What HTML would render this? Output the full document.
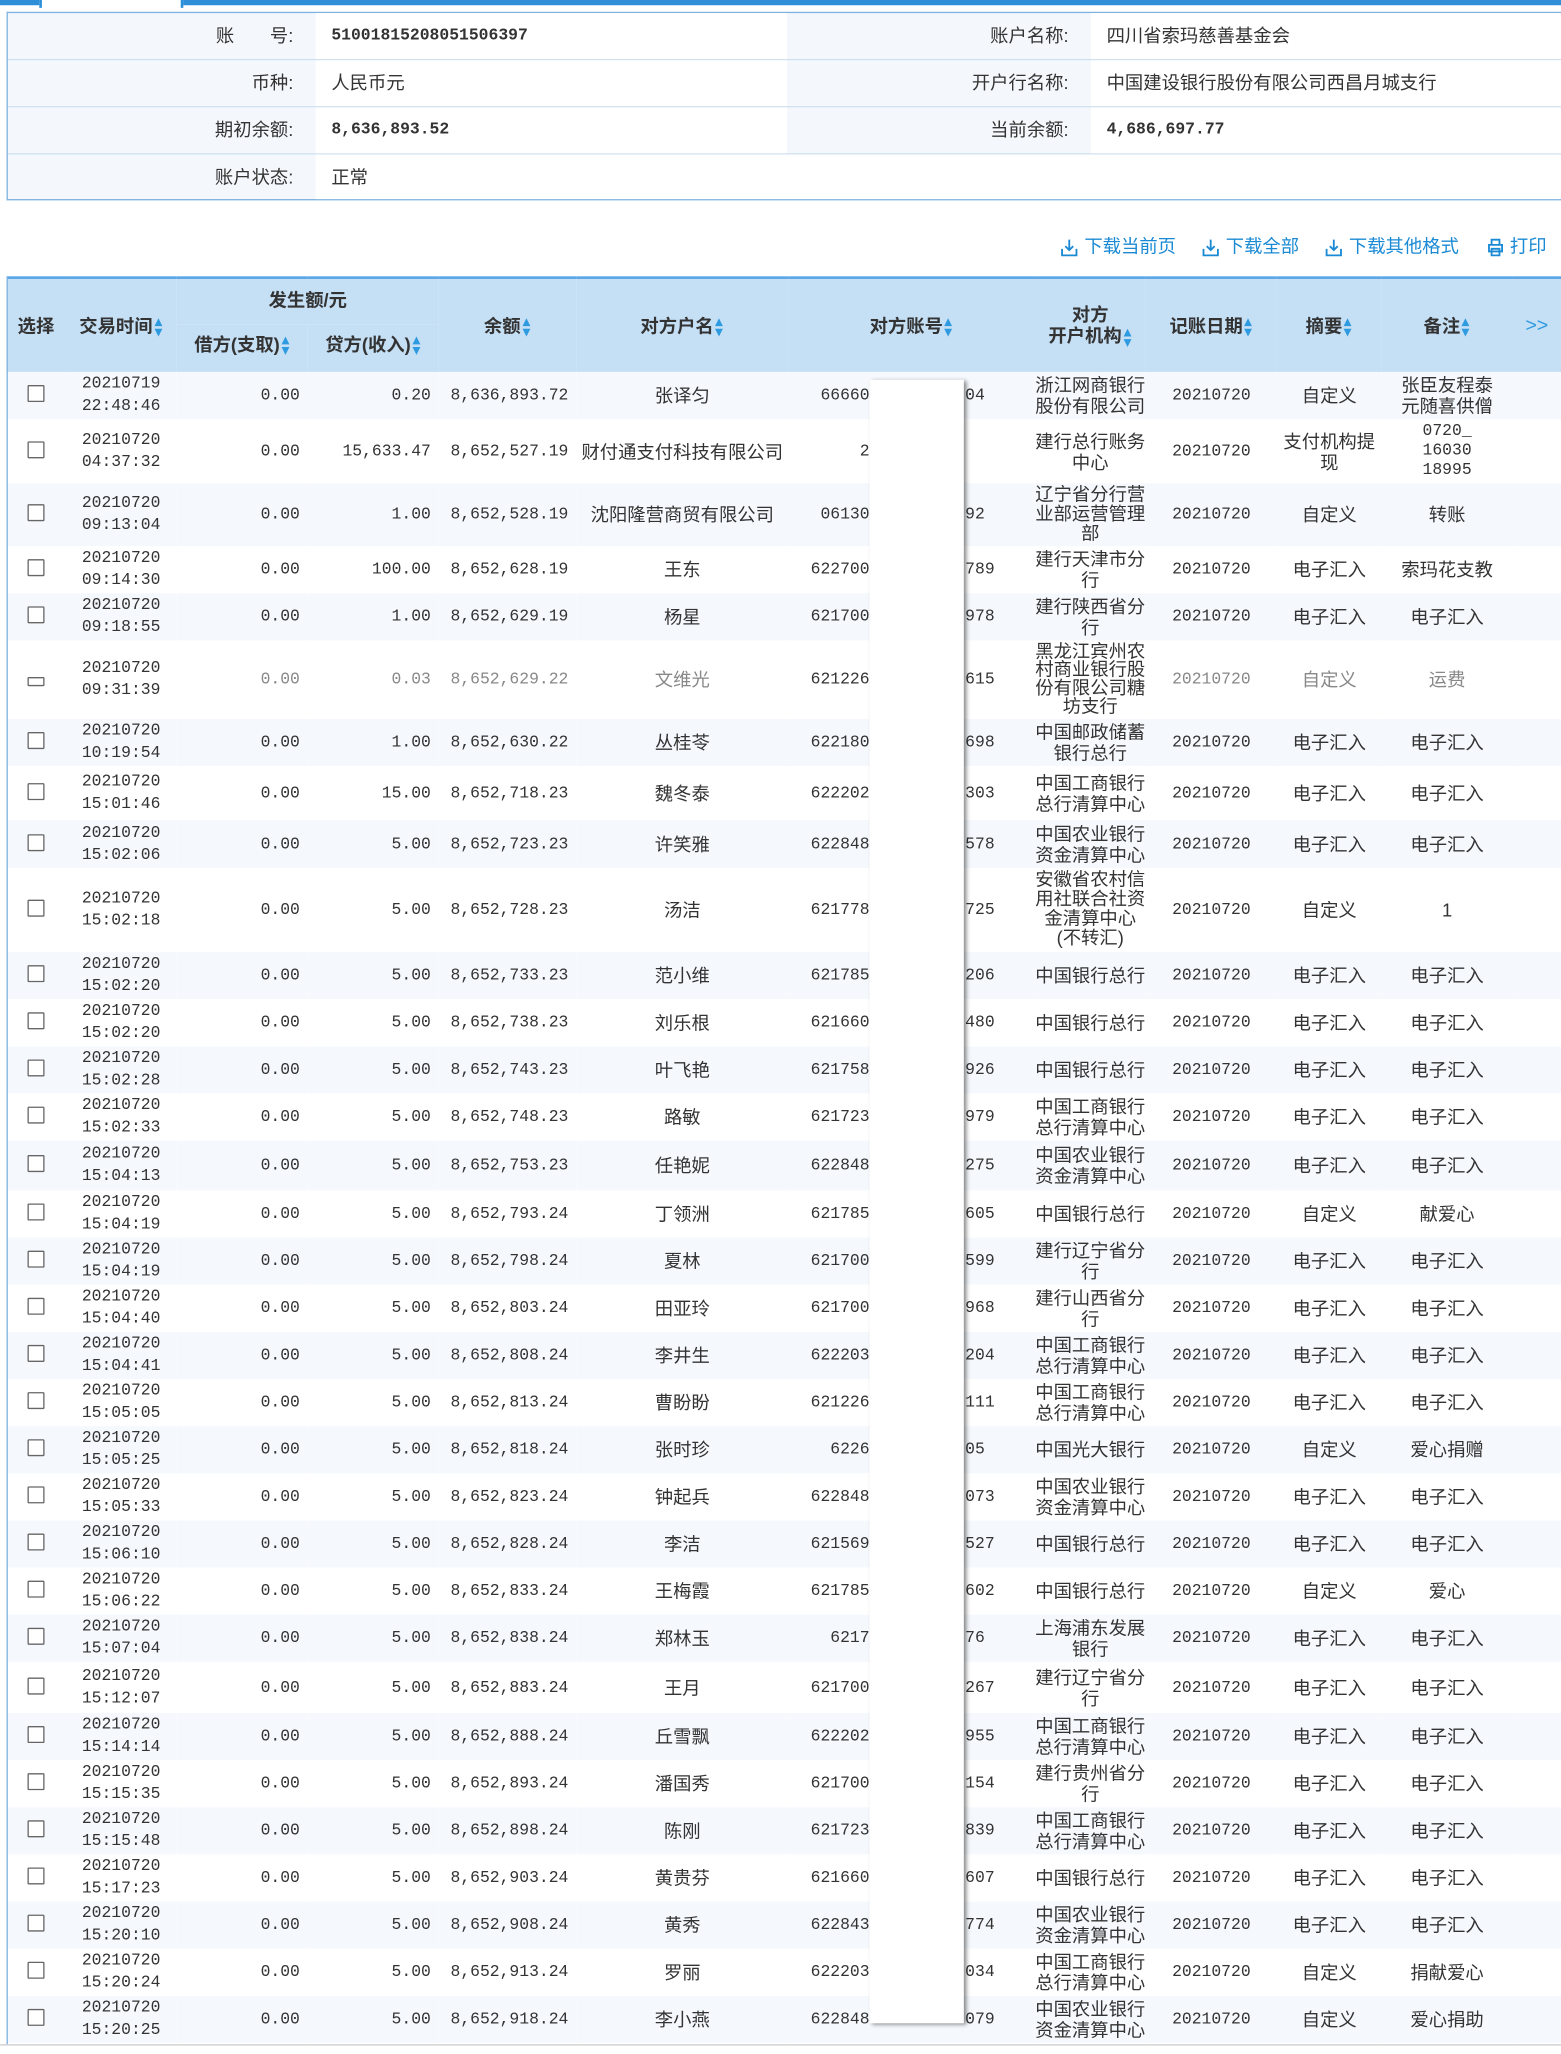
<!DOCTYPE html>
<html><head><meta charset="utf-8">
<style>
html,body{margin:0;padding:0;background:#fff;width:1561px;height:2054px;overflow:hidden}
#w{position:absolute;left:0;top:0;width:1192px;height:1568px;transform:scale(1.30957);transform-origin:0 0;font-family:"Liberation Sans","Noto Sans CJK SC",sans-serif;color:#333;font-size:14px}
.abs{position:absolute}
.info{position:absolute;left:5px;top:9px;width:1187px;height:144px;border:1px solid #7fb2e0;border-right:none;box-sizing:border-box;background:#f4f8fc}
.info .r{position:absolute;left:0;width:100%;height:35px;border-bottom:1px solid #cfe0f0}
.info .v{position:absolute;top:0;height:35px;background:#fff;line-height:35px;padding-left:12px;box-sizing:border-box}
.info .l{position:absolute;top:0;height:35px;line-height:35px;text-align:right}
.num{font-family:"Liberation Mono",monospace;font-size:12.5px}
.links{position:absolute;top:178px;color:#1a8ad4;font-size:14px;line-height:20px}
table{position:absolute;left:5px;top:211px;width:1187px;border-collapse:collapse;table-layout:fixed}
th{background:#c5dff5;font-weight:bold;font-size:14px;color:#333;padding:0;text-align:center}
td{padding:0;text-align:center;font-size:14px;line-height:16px;vertical-align:middle;overflow:hidden}
tr.o td{background:#f5f9fd}
tr.e td{background:#fff}
td.n{font-family:"Liberation Mono",monospace;font-size:12.5px;text-align:right;padding-right:6px}
td.t{font-family:"Liberation Mono",monospace;font-size:12.5px;line-height:17px}
td.d{font-family:"Liberation Mono",monospace;font-size:12.5px}
td.a{position:relative}
td.a span.x{position:absolute;right:126px;top:50%;margin-top:-8px;font-family:"Liberation Mono",monospace;font-size:12.5px}
td.a span.y{position:absolute;left:135px;top:50%;margin-top:-8px;font-family:"Liberation Mono",monospace;font-size:12.5px}
.cb{display:inline-block;width:11px;height:11px;border:1px solid #666;background:#fff;border-radius:1px}
.s{display:inline-block;width:7px;height:14px;vertical-align:middle;margin-left:1px;position:relative}
.s:before{content:"";position:absolute;left:0;top:0;border-left:3.5px solid transparent;border-right:3.5px solid transparent;border-bottom:6px solid #2e9ae0}
.s:after{content:"";position:absolute;left:0;top:8px;border-left:3.5px solid transparent;border-right:3.5px solid transparent;border-top:6px solid #2e9ae0}
.clip{overflow:hidden;line-height:14px}
</style></head><body><div id="w">
<div class="abs" style="left:0;top:0;width:30px;height:4px;background:#2e8fd8"></div>
<div class="abs" style="left:30px;top:0;width:2px;height:6px;background:#2e8fd8"></div>
<div class="abs" style="left:140px;top:0;width:1052px;height:4px;background:#2e8fd8"></div>
<div class="abs" style="left:138px;top:0;width:2px;height:6px;background:#2e8fd8"></div>

<div class="info">
 <div class="r" style="top:0"><div class="l" style="left:0;width:218px">账&nbsp;&nbsp;&nbsp;&nbsp;&nbsp;&nbsp;&nbsp;号:</div><div class="v num" style="left:235px;width:360px;font-weight:bold">51001815208051506397</div><div class="l" style="left:595px;width:215px">账户名称:</div><div class="v" style="left:827px;width:360px">四川省索玛慈善基金会</div></div>
 <div class="r" style="top:36px"><div class="l" style="left:0;width:218px">币种:</div><div class="v" style="left:235px;width:360px">人民币元</div><div class="l" style="left:595px;width:215px">开户行名称:</div><div class="v" style="left:827px;width:360px">中国建设银行股份有限公司西昌月城支行</div></div>
 <div class="r" style="top:72px"><div class="l" style="left:0;width:218px">期初余额:</div><div class="v num" style="left:235px;width:360px;font-weight:bold">8,636,893.52</div><div class="l" style="left:595px;width:215px">当前余额:</div><div class="v num" style="left:827px;width:360px;font-weight:bold">4,686,697.77</div></div>
 <div class="r" style="top:108px;height:34px;border-bottom:none"><div class="l" style="left:0;width:218px;height:34px">账户状态:</div><div class="v" style="left:235px;width:952px;height:34px">正常</div></div>
</div>

<svg class="abs" style="left:810px;top:182px" width="13" height="14" viewBox="0 0 13 14"><path d="M6.5 1v8M3.5 6l3 3 3-3M1 8v5h11V8" fill="none" stroke="#1a8ad4" stroke-width="1.4"/></svg>
<div class="links" style="left:828px">下载当前页</div>
<svg class="abs" style="left:918px;top:182px" width="13" height="14" viewBox="0 0 13 14"><path d="M6.5 1v8M3.5 6l3 3 3-3M1 8v5h11V8" fill="none" stroke="#1a8ad4" stroke-width="1.4"/></svg>
<div class="links" style="left:936px">下载全部</div>
<svg class="abs" style="left:1012px;top:182px" width="13" height="14" viewBox="0 0 13 14"><path d="M6.5 1v8M3.5 6l3 3 3-3M1 8v5h11V8" fill="none" stroke="#1a8ad4" stroke-width="1.4"/></svg>
<div class="links" style="left:1030px">下载其他格式</div>
<svg class="abs" style="left:1136px;top:182px" width="12" height="14" viewBox="0 0 12 14"><path d="M3 5V1h6v4M1 5h10v5H1zM3 8h6v5H3z" fill="none" stroke="#1a8ad4" stroke-width="1.4"/></svg>
<div class="links" style="left:1153px">打印</div>

<table>
<colgroup><col style="width:45px"><col style="width:85px"><col style="width:100px"><col style="width:100px"><col style="width:105px"><col style="width:162px"><col style="width:188px"><col style="width:85px"><col style="width:100px"><col style="width:80px"><col style="width:100px"><col style="width:37px"></colgroup>
<tr style="height:36px"><th rowspan="2" style="border-top:2px solid #5aa5e6">选择</th><th rowspan="2" style="border-top:2px solid #5aa5e6">交易时间<i class="s"></i></th><th colspan="2" style="border-top:2px solid #5aa5e6;vertical-align:bottom;padding-bottom:9px">发生额/元</th><th rowspan="2" style="border-top:2px solid #5aa5e6">余额<i class="s"></i></th><th rowspan="2" style="border-top:2px solid #5aa5e6">对方户名<i class="s"></i></th><th rowspan="2" style="border-top:2px solid #5aa5e6">对方账号<i class="s"></i></th><th rowspan="2" style="border-top:2px solid #5aa5e6;line-height:16px">对方<br>开户机构<i class="s"></i></th><th rowspan="2" style="border-top:2px solid #5aa5e6">记账日期<i class="s"></i></th><th rowspan="2" style="border-top:2px solid #5aa5e6">摘要<i class="s"></i></th><th rowspan="2" style="border-top:2px solid #5aa5e6">备注<i class="s"></i></th><th rowspan="2" style="border-top:2px solid #5aa5e6;color:#2e9ae0;font-weight:normal;font-size:15px">&gt;&gt;</th></tr>
<tr style="height:36px"><th style="vertical-align:top;padding-top:5px">借方(支取)<i class="s"></i></th><th style="vertical-align:top;padding-top:5px">贷方(收入)<i class="s"></i></th></tr>

<tr class="o" style="height:36px"><td><i class="cb"></i></td><td class="t">20210719<br>22:48:46</td><td class="n">0.00</td><td class="n">0.20</td><td class="n">8,636,893.72</td><td>张译匀</td><td class="a"><span class="x">66660</span><span class="y">04</span></td><td>浙江网商银行股份有限公司</td><td class="d">20210720</td><td>自定义</td><td>张臣友程泰<br>元随喜供僧</td><td></td></tr>
<tr class="e" style="height:49px"><td><i class="cb"></i></td><td class="t">20210720<br>04:37:32</td><td class="n">0.00</td><td class="n">15,633.47</td><td class="n">8,652,527.19</td><td>财付通支付科技有限公司</td><td class="a"><span class="x">2</span></td><td>建行总行账务中心</td><td class="d">20210720</td><td>支付机构提现</td><td class="d" style="line-height:15px">0720_<br>16030<br>18995</td><td></td></tr>
<tr class="o" style="height:48px"><td><i class="cb"></i></td><td class="t">20210720<br>09:13:04</td><td class="n">0.00</td><td class="n">1.00</td><td class="n">8,652,528.19</td><td>沈阳隆营商贸有限公司</td><td class="a"><span class="x">06130</span><span class="y">92</span></td><td><div class="clip" style="height:46px;line-height:15px">辽宁省分行营业部运营管理部</div></td><td class="d">20210720</td><td>自定义</td><td>转账</td><td></td></tr>
<tr class="e" style="height:36px"><td><i class="cb"></i></td><td class="t">20210720<br>09:14:30</td><td class="n">0.00</td><td class="n">100.00</td><td class="n">8,652,628.19</td><td>王东</td><td class="a"><span class="x">622700</span><span class="y">789</span></td><td>建行天津市分行</td><td class="d">20210720</td><td>电子汇入</td><td>索玛花支教</td><td></td></tr>
<tr class="o" style="height:36px"><td><i class="cb"></i></td><td class="t">20210720<br>09:18:55</td><td class="n">0.00</td><td class="n">1.00</td><td class="n">8,652,629.19</td><td>杨星</td><td class="a"><span class="x">621700</span><span class="y">978</span></td><td>建行陕西省分行</td><td class="d">20210720</td><td>电子汇入</td><td>电子汇入</td><td></td></tr>
<tr class="e" style="height:60px"><td><i class="cb" style="height:5px"></i></td><td class="t">20210720<br>09:31:39</td><td class="n" style="color:#888">0.00</td><td class="n" style="color:#888">0.03</td><td class="n" style="color:#888">8,652,629.22</td><td style="color:#888">文维光</td><td class="a"><span class="x">621226</span><span class="y">615</span></td><td><div class="clip" style="height:58px">黑龙江宾州农村商业银行股份有限公司糖坊支行</div></td><td class="d" style="color:#888">20210720</td><td style="color:#888">自定义</td><td style="color:#888">运费</td><td></td></tr>
<tr class="o" style="height:36px"><td><i class="cb"></i></td><td class="t">20210720<br>10:19:54</td><td class="n">0.00</td><td class="n">1.00</td><td class="n">8,652,630.22</td><td>丛桂苓</td><td class="a"><span class="x">622180</span><span class="y">698</span></td><td>中国邮政储蓄银行总行</td><td class="d">20210720</td><td>电子汇入</td><td>电子汇入</td><td></td></tr>
<tr class="e" style="height:41px"><td><i class="cb"></i></td><td class="t">20210720<br>15:01:46</td><td class="n">0.00</td><td class="n">15.00</td><td class="n">8,652,718.23</td><td>魏冬泰</td><td class="a"><span class="x">622202</span><span class="y">303</span></td><td>中国工商银行总行清算中心</td><td class="d">20210720</td><td>电子汇入</td><td>电子汇入</td><td></td></tr>
<tr class="o" style="height:37px"><td><i class="cb"></i></td><td class="t">20210720<br>15:02:06</td><td class="n">0.00</td><td class="n">5.00</td><td class="n">8,652,723.23</td><td>许笑雅</td><td class="a"><span class="x">622848</span><span class="y">578</span></td><td>中国农业银行资金清算中心</td><td class="d">20210720</td><td>电子汇入</td><td>电子汇入</td><td></td></tr>
<tr class="e" style="height:64px"><td><i class="cb"></i></td><td class="t">20210720<br>15:02:18</td><td class="n">0.00</td><td class="n">5.00</td><td class="n">8,652,728.23</td><td>汤洁</td><td class="a"><span class="x">621778</span><span class="y">725</span></td><td><div class="clip" style="height:62px;line-height:15px">安徽省农村信用社联合社资金清算中心(不转汇)</div></td><td class="d">20210720</td><td>自定义</td><td>1</td><td></td></tr>
<tr class="o" style="height:36px"><td><i class="cb"></i></td><td class="t">20210720<br>15:02:20</td><td class="n">0.00</td><td class="n">5.00</td><td class="n">8,652,733.23</td><td>范小维</td><td class="a"><span class="x">621785</span><span class="y">206</span></td><td>中国银行总行</td><td class="d">20210720</td><td>电子汇入</td><td>电子汇入</td><td></td></tr>
<tr class="e" style="height:36px"><td><i class="cb"></i></td><td class="t">20210720<br>15:02:20</td><td class="n">0.00</td><td class="n">5.00</td><td class="n">8,652,738.23</td><td>刘乐根</td><td class="a"><span class="x">621660</span><span class="y">480</span></td><td>中国银行总行</td><td class="d">20210720</td><td>电子汇入</td><td>电子汇入</td><td></td></tr>
<tr class="o" style="height:36px"><td><i class="cb"></i></td><td class="t">20210720<br>15:02:28</td><td class="n">0.00</td><td class="n">5.00</td><td class="n">8,652,743.23</td><td>叶飞艳</td><td class="a"><span class="x">621758</span><span class="y">926</span></td><td>中国银行总行</td><td class="d">20210720</td><td>电子汇入</td><td>电子汇入</td><td></td></tr>
<tr class="e" style="height:36px"><td><i class="cb"></i></td><td class="t">20210720<br>15:02:33</td><td class="n">0.00</td><td class="n">5.00</td><td class="n">8,652,748.23</td><td>路敏</td><td class="a"><span class="x">621723</span><span class="y">979</span></td><td>中国工商银行总行清算中心</td><td class="d">20210720</td><td>电子汇入</td><td>电子汇入</td><td></td></tr>
<tr class="o" style="height:38px"><td><i class="cb"></i></td><td class="t">20210720<br>15:04:13</td><td class="n">0.00</td><td class="n">5.00</td><td class="n">8,652,753.23</td><td>任艳妮</td><td class="a"><span class="x">622848</span><span class="y">275</span></td><td>中国农业银行资金清算中心</td><td class="d">20210720</td><td>电子汇入</td><td>电子汇入</td><td></td></tr>
<tr class="e" style="height:36px"><td><i class="cb"></i></td><td class="t">20210720<br>15:04:19</td><td class="n">0.00</td><td class="n">5.00</td><td class="n">8,652,793.24</td><td>丁领洲</td><td class="a"><span class="x">621785</span><span class="y">605</span></td><td>中国银行总行</td><td class="d">20210720</td><td>自定义</td><td>献爱心</td><td></td></tr>
<tr class="o" style="height:36px"><td><i class="cb"></i></td><td class="t">20210720<br>15:04:19</td><td class="n">0.00</td><td class="n">5.00</td><td class="n">8,652,798.24</td><td>夏林</td><td class="a"><span class="x">621700</span><span class="y">599</span></td><td>建行辽宁省分行</td><td class="d">20210720</td><td>电子汇入</td><td>电子汇入</td><td></td></tr>
<tr class="e" style="height:36px"><td><i class="cb"></i></td><td class="t">20210720<br>15:04:40</td><td class="n">0.00</td><td class="n">5.00</td><td class="n">8,652,803.24</td><td>田亚玲</td><td class="a"><span class="x">621700</span><span class="y">968</span></td><td>建行山西省分行</td><td class="d">20210720</td><td>电子汇入</td><td>电子汇入</td><td></td></tr>
<tr class="o" style="height:36px"><td><i class="cb"></i></td><td class="t">20210720<br>15:04:41</td><td class="n">0.00</td><td class="n">5.00</td><td class="n">8,652,808.24</td><td>李井生</td><td class="a"><span class="x">622203</span><span class="y">204</span></td><td>中国工商银行总行清算中心</td><td class="d">20210720</td><td>电子汇入</td><td>电子汇入</td><td></td></tr>
<tr class="e" style="height:36px"><td><i class="cb"></i></td><td class="t">20210720<br>15:05:05</td><td class="n">0.00</td><td class="n">5.00</td><td class="n">8,652,813.24</td><td>曹盼盼</td><td class="a"><span class="x">621226</span><span class="y">111</span></td><td>中国工商银行总行清算中心</td><td class="d">20210720</td><td>电子汇入</td><td>电子汇入</td><td></td></tr>
<tr class="o" style="height:36px"><td><i class="cb"></i></td><td class="t">20210720<br>15:05:25</td><td class="n">0.00</td><td class="n">5.00</td><td class="n">8,652,818.24</td><td>张时珍</td><td class="a"><span class="x">6226</span><span class="y">05</span></td><td>中国光大银行</td><td class="d">20210720</td><td>自定义</td><td>爱心捐赠</td><td></td></tr>
<tr class="e" style="height:36px"><td><i class="cb"></i></td><td class="t">20210720<br>15:05:33</td><td class="n">0.00</td><td class="n">5.00</td><td class="n">8,652,823.24</td><td>钟起兵</td><td class="a"><span class="x">622848</span><span class="y">073</span></td><td>中国农业银行资金清算中心</td><td class="d">20210720</td><td>电子汇入</td><td>电子汇入</td><td></td></tr>
<tr class="o" style="height:36px"><td><i class="cb"></i></td><td class="t">20210720<br>15:06:10</td><td class="n">0.00</td><td class="n">5.00</td><td class="n">8,652,828.24</td><td>李洁</td><td class="a"><span class="x">621569</span><span class="y">527</span></td><td>中国银行总行</td><td class="d">20210720</td><td>电子汇入</td><td>电子汇入</td><td></td></tr>
<tr class="e" style="height:36px"><td><i class="cb"></i></td><td class="t">20210720<br>15:06:22</td><td class="n">0.00</td><td class="n">5.00</td><td class="n">8,652,833.24</td><td>王梅霞</td><td class="a"><span class="x">621785</span><span class="y">602</span></td><td>中国银行总行</td><td class="d">20210720</td><td>自定义</td><td>爱心</td><td></td></tr>
<tr class="o" style="height:36px"><td><i class="cb"></i></td><td class="t">20210720<br>15:07:04</td><td class="n">0.00</td><td class="n">5.00</td><td class="n">8,652,838.24</td><td>郑林玉</td><td class="a"><span class="x">6217</span><span class="y">76</span></td><td>上海浦东发展银行</td><td class="d">20210720</td><td>电子汇入</td><td>电子汇入</td><td></td></tr>
<tr class="e" style="height:39px"><td><i class="cb"></i></td><td class="t">20210720<br>15:12:07</td><td class="n">0.00</td><td class="n">5.00</td><td class="n">8,652,883.24</td><td>王月</td><td class="a"><span class="x">621700</span><span class="y">267</span></td><td>建行辽宁省分行</td><td class="d">20210720</td><td>电子汇入</td><td>电子汇入</td><td></td></tr>
<tr class="o" style="height:36px"><td><i class="cb"></i></td><td class="t">20210720<br>15:14:14</td><td class="n">0.00</td><td class="n">5.00</td><td class="n">8,652,888.24</td><td>丘雪飘</td><td class="a"><span class="x">622202</span><span class="y">955</span></td><td>中国工商银行总行清算中心</td><td class="d">20210720</td><td>电子汇入</td><td>电子汇入</td><td></td></tr>
<tr class="e" style="height:36px"><td><i class="cb"></i></td><td class="t">20210720<br>15:15:35</td><td class="n">0.00</td><td class="n">5.00</td><td class="n">8,652,893.24</td><td>潘国秀</td><td class="a"><span class="x">621700</span><span class="y">154</span></td><td>建行贵州省分行</td><td class="d">20210720</td><td>电子汇入</td><td>电子汇入</td><td></td></tr>
<tr class="o" style="height:36px"><td><i class="cb"></i></td><td class="t">20210720<br>15:15:48</td><td class="n">0.00</td><td class="n">5.00</td><td class="n">8,652,898.24</td><td>陈刚</td><td class="a"><span class="x">621723</span><span class="y">839</span></td><td>中国工商银行总行清算中心</td><td class="d">20210720</td><td>电子汇入</td><td>电子汇入</td><td></td></tr>
<tr class="e" style="height:36px"><td><i class="cb"></i></td><td class="t">20210720<br>15:17:23</td><td class="n">0.00</td><td class="n">5.00</td><td class="n">8,652,903.24</td><td>黄贵芬</td><td class="a"><span class="x">621660</span><span class="y">607</span></td><td>中国银行总行</td><td class="d">20210720</td><td>电子汇入</td><td>电子汇入</td><td></td></tr>
<tr class="o" style="height:36px"><td><i class="cb"></i></td><td class="t">20210720<br>15:20:10</td><td class="n">0.00</td><td class="n">5.00</td><td class="n">8,652,908.24</td><td>黄秀</td><td class="a"><span class="x">622843</span><span class="y">774</span></td><td>中国农业银行资金清算中心</td><td class="d">20210720</td><td>电子汇入</td><td>电子汇入</td><td></td></tr>
<tr class="e" style="height:36px"><td><i class="cb"></i></td><td class="t">20210720<br>15:20:24</td><td class="n">0.00</td><td class="n">5.00</td><td class="n">8,652,913.24</td><td>罗丽</td><td class="a"><span class="x">622203</span><span class="y">034</span></td><td>中国工商银行总行清算中心</td><td class="d">20210720</td><td>自定义</td><td>捐献爱心</td><td></td></tr>
<tr class="o" style="height:36px"><td><i class="cb"></i></td><td class="t">20210720<br>15:20:25</td><td class="n">0.00</td><td class="n">5.00</td><td class="n">8,652,918.24</td><td>李小燕</td><td class="a"><span class="x">622848</span><span class="y">079</span></td><td>中国农业银行资金清算中心</td><td class="d">20210720</td><td>自定义</td><td>爱心捐助</td><td></td></tr>
</table>
<div class="abs" style="left:5px;top:211px;width:1px;height:1350px;background:#7fb2e0"></div>
<div class="abs" style="left:0;top:1561px;width:1192px;height:1px;background:#ccc"></div>
<div class="abs" style="left:664px;top:290px;width:72px;height:1255px;background:#fff;box-shadow:2px 1px 3px rgba(0,0,0,0.45)"></div>
</div></body></html>
